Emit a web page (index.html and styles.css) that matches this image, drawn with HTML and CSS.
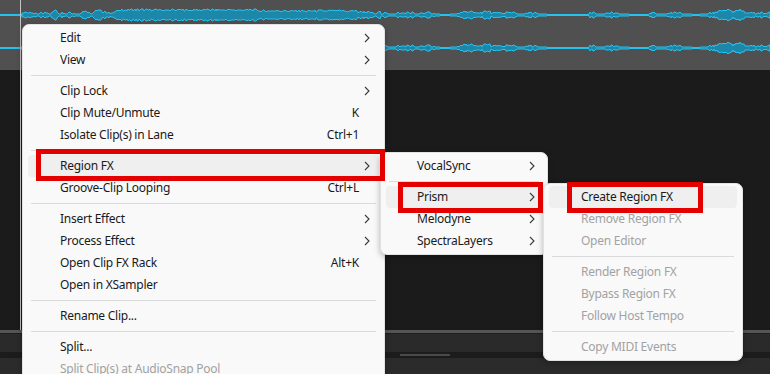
FILE: index.html
```html
<!DOCTYPE html>
<html lang="en">
<head>
    <meta charset="UTF-8">
    <meta name="viewport" content="width=device-width, initial-scale=1.0">
    <title>Clip Context Menu</title>
    <link rel="stylesheet" href="styles.css">
</head>
<body>
    <div id="track">
        <div class="lanes">
            <svg id="wave" width="770" height="70" viewBox="0 0 770 70"></svg>
        </div>
        <div class="area"></div>
        <div class="rule"></div>
        <div class="bar"></div>
        <div class="scroll"><div class="thumb"></div></div>
        <div class="footer"></div>
    </div>
    <div class="cursor"></div>

    <div class="menu menu-main">
        <div class="item"><span class="label">Edit</span><span class="key"></span><span class="arrow"><svg width="6" height="10" viewBox="0 0 6 10"><path d="M1 1 L5 5 L1 9"/></svg></span></div>
        <div class="item"><span class="label">View</span><span class="key"></span><span class="arrow"><svg width="6" height="10" viewBox="0 0 6 10"><path d="M1 1 L5 5 L1 9"/></svg></span></div>
        <div class="sep"></div>
        <div class="item"><span class="label">Clip Lock</span><span class="key"></span><span class="arrow"><svg width="6" height="10" viewBox="0 0 6 10"><path d="M1 1 L5 5 L1 9"/></svg></span></div>
        <div class="item"><span class="label">Clip Mute/Unmute</span><span class="key">K</span><span class="arrow"></span></div>
        <div class="item"><span class="label">Isolate Clip(s) in Lane</span><span class="key">Ctrl+1</span><span class="arrow"></span></div>
        <div class="sep"></div>
        <div class="item active"><span class="label">Region FX</span><span class="key"></span><span class="arrow"><svg width="6" height="10" viewBox="0 0 6 10"><path d="M1 1 L5 5 L1 9"/></svg></span></div>
        <div class="item"><span class="label">Groove-Clip Looping</span><span class="key">Ctrl+L</span><span class="arrow"></span></div>
        <div class="sep"></div>
        <div class="item"><span class="label">Insert Effect</span><span class="key"></span><span class="arrow"><svg width="6" height="10" viewBox="0 0 6 10"><path d="M1 1 L5 5 L1 9"/></svg></span></div>
        <div class="item"><span class="label">Process Effect</span><span class="key"></span><span class="arrow"><svg width="6" height="10" viewBox="0 0 6 10"><path d="M1 1 L5 5 L1 9"/></svg></span></div>
        <div class="item"><span class="label">Open Clip FX Rack</span><span class="key">Alt+K</span><span class="arrow"></span></div>
        <div class="item"><span class="label">Open in XSampler</span><span class="key"></span><span class="arrow"></span></div>
        <div class="sep"></div>
        <div class="item"><span class="label">Rename Clip...</span><span class="key"></span><span class="arrow"></span></div>
        <div class="sep"></div>
        <div class="item"><span class="label">Split...</span><span class="key"></span><span class="arrow"></span></div>
        <div class="item disabled"><span class="label">Split Clip(s) at AudioSnap Pool</span><span class="key"></span><span class="arrow"></span></div>
    </div>

    <div class="menu menu-fx">
        <div class="item"><span class="label">VocalSync</span><span class="arrow"><svg width="6" height="10" viewBox="0 0 6 10"><path d="M1 1 L5 5 L1 9"/></svg></span></div>
        <div class="sep"></div>
        <div class="item active"><span class="label">Prism</span><span class="arrow"><svg width="6" height="10" viewBox="0 0 6 10"><path d="M1 1 L5 5 L1 9"/></svg></span></div>
        <div class="item"><span class="label">Melodyne</span><span class="arrow"><svg width="6" height="10" viewBox="0 0 6 10"><path d="M1 1 L5 5 L1 9"/></svg></span></div>
        <div class="item"><span class="label">SpectraLayers</span><span class="arrow"><svg width="6" height="10" viewBox="0 0 6 10"><path d="M1 1 L5 5 L1 9"/></svg></span></div>
    </div>

    <div class="menu menu-prism">
        <div class="item active"><span class="label">Create Region FX</span></div>
        <div class="item disabled"><span class="label">Remove Region FX</span></div>
        <div class="item disabled"><span class="label">Open Editor</span></div>
        <div class="sep"></div>
        <div class="item disabled"><span class="label">Render Region FX</span></div>
        <div class="item disabled"><span class="label">Bypass Region FX</span></div>
        <div class="item disabled"><span class="label">Follow Host Tempo</span></div>
        <div class="sep"></div>
        <div class="item disabled"><span class="label">Copy MIDI Events</span></div>
    </div>

    <div class="mark mark-region"></div>
    <div class="mark mark-prism"></div>
    <div class="mark mark-create"></div>

    <script>
        // waveform envelope: [x, amplitude]
        const keys = [[22,2],[26,3],[30,2],[34,2],[38,1],[42,2],[46,2],[50,1],[53,3],[56,5],[58,2],[62,2],[66,1],[69,3],[72,2],[76,1],[80,1],[83,4],[86,4],[88,2],[92,1],[95,3],[98,6],[101,4],[104,3],[107,2],[110,2],[113,3],[118,4],[125,5],[255,5],[262,4],[350,4],[365,3],[372,2],[376,1],[380,3],[382,1],[386,2],[388,1],[395,1],[398,2],[405,2],[412,2],[416,1],[424,2],[432,2],[436,1],[445,0],[455,1],[460,2],[465,3],[470,3],[475,2],[480,2],[485,3],[495,2],[505,2],[515,2],[522,1],[530,2],[545,1],[550,0],[588,0],[590,2],[600,1],[612,2],[625,1],[633,0],[648,0],[650,2],[660,1],[675,2],[690,1],[695,0],[705,1],[712,2],[718,3],[722,4],[726,5],[730,5],[733,3],[736,4],[740,5],[743,3],[746,2],[770,2]];

        function amp(x) {
            for (let i = 1; i < keys.length; i++) {
                if (x <= keys[i][0]) {
                    const a = keys[i - 1], b = keys[i];
                    const t = (x - a[0]) / (b[0] - a[0]);
                    return a[1] + (b[1] - a[1]) * t;
                }
            }
            return 0;
        }

        function noise(x) {
            const s = Math.sin(x * 12.9898) * 43758.5453;
            return s - Math.floor(s);
        }

        function lane(cy) {
            let top = [], bottom = [];
            for (let x = 22; x <= 770; x++) {
                let a = amp(x);
                if (a > 1.5) a += Math.round(noise(x) * 2 - 1);
                a = Math.max(0, Math.round(a));
                top.push(x + ' ' + (cy - a));
                bottom.unshift(x + ' ' + (cy + a));
            }
            return 'M' + top.join(' L') + ' L' + bottom.join(' L') + ' Z';
        }

        const svg = document.getElementById('wave');
        let out = '';
        [15, 48].forEach(cy => {
            out += `<rect x="0" y="${cy - 1}" width="770" height="2" fill="#27bfec"/>`;
            out += `<path d="${lane(cy)}" fill="#1c87a8" stroke="#28c1ee" stroke-width="1"/>`;
        });
        svg.innerHTML = out;
    </script>
</body>
</html>
```

FILE: styles.css
```css
body { margin: 0; background: #1b1b1b; font-family: "Noto Sans", "Liberation Sans", sans-serif; font-size: 12px; letter-spacing: -0.25px; overflow: hidden; }
#track { display: flex; flex-direction: column; width: 770px; height: 374px; }
.lanes { height: 70px; background: #505050; }
.lanes svg { display: block; }
.area { height: 260px; background: #1b1b1b; }
.rule { height: 3px; background: #565656; border-bottom: 1px solid #1e1e1e; }
.bar { height: 18px; background: #2a2a2a; }
.scroll { height: 6px; background: #1c1c1c; padding-top: 2px; box-sizing: border-box; }
.thumb { width: 50px; height: 2px; margin-left: 400px; background: #4a4a4a; }
.footer { flex: 1; background: #2b2b2b; }
.cursor { position: absolute; left: 20px; top: 0; width: 1px; height: 330px; background: #c4c4c4; }

.menu { position: absolute; background: #f9f9f9; border: 1px solid #e2e2e2; border-radius: 7px; padding: 2px 0; box-shadow: 0 2px 6px rgba(0,0,0,0.28); color: #1a1a1a; }
.menu-main { left: 22px; top: 24px; width: 361px; height: 360px; overflow: hidden; }
.menu-fx { left: 380px; top: 152px; width: 166px; }
.menu-prism { left: 543px; top: 183px; width: 198px; }

.item { display: flex; align-items: center; height: 22px; margin: 0 5px; padding-left: 32px; padding-bottom: 1px; box-sizing: border-box; border-radius: 4px; white-space: nowrap; }
.menu-fx .item { padding-left: 31px; }
.item.active { background: #efefef; }
.item.disabled { color: #a2a2a2; }
.label { flex: 1; }
.key { text-align: right; }
.arrow { width: 20px; padding-left: 5px; padding-top: 1px; box-sizing: border-box; display: flex; align-items: center; }
.menu-fx .arrow { width: 18px; }
.arrow path { fill: none; stroke: #3a3a3a; stroke-width: 1.1; }

.sep { height: 9px; margin: 0 8px; display: flex; align-items: center; }
.sep::before { content: ""; flex: 1; height: 1px; background: #dadada; }

.mark { position: absolute; border: 5px solid #e50000; box-sizing: border-box; }
.mark-region { left: 36px; top: 149px; width: 349px; height: 32px; }
.mark-prism { left: 398px; top: 182px; width: 145px; height: 31px; }
.mark-create { left: 567px; top: 182px; width: 136px; height: 31px; }
```
